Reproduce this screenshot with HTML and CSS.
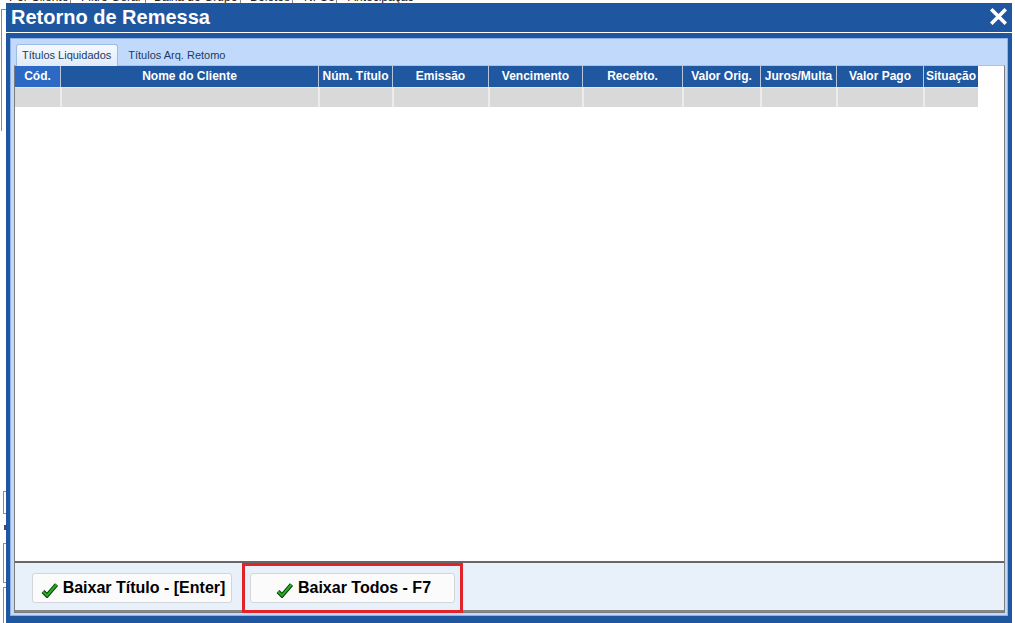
FILE: index.html
```html
<!DOCTYPE html>
<html lang="pt-BR">
<head>
<meta charset="utf-8">
<title>Retorno de Remessa</title>
<link rel="stylesheet" href="styles.css">
</head>
<body>
<div class="bg-app">
  <div class="bg-tabs">
    <span class="bg-tab w1">Por Cliente</span>
    <span class="bg-tab w2">Filtro Geral</span>
    <span class="bg-tab w3">Baixa do Grupo</span>
    <span class="bg-tab w4">Boletos</span>
    <span class="bg-tab w5">NFSe</span>
    <span class="bg-tab w6">Antecipação</span>
  </div>
  <div class="bg-frame"></div>
  <div class="bg-box b1"></div>
  <div class="bg-dot"></div>
  <div class="bg-box b2"></div>
  <div class="bg-box b3"></div>
</div>

<div class="window">
  <div class="titlebar">
    <span class="title">Retorno de Remessa</span>
    <svg class="close" width="17" height="17" viewBox="0 0 17 17" aria-label="Fechar">
      <path d="M2.5 2.5 L14.5 14.5 M14.5 2.5 L2.5 14.5" stroke="#fff" stroke-width="3.6" stroke-linecap="square" fill="none"/>
    </svg>
  </div>
  <div class="panel">
    <div class="tabs">
      <div class="tab active">Títulos Liquidados</div>
      <div class="tab">Títulos Arq. Retomo</div>
    </div>
    <div class="tabpage">
      <div class="gridarea">
        <div class="grid">
          <div class="hcell sel">Cód.</div>
          <div class="hcell">Nome do Cliente</div>
          <div class="hcell">Núm. Título</div>
          <div class="hcell">Emissão</div>
          <div class="hcell">Vencimento</div>
          <div class="hcell">Recebto.</div>
          <div class="hcell">Valor Orig.</div>
          <div class="hcell">Juros/Multa</div>
          <div class="hcell">Valor Pago</div>
          <div class="hcell">Situação</div>
          <div class="dcell"></div>
          <div class="dcell"></div>
          <div class="dcell"></div>
          <div class="dcell"></div>
          <div class="dcell"></div>
          <div class="dcell"></div>
          <div class="dcell"></div>
          <div class="dcell"></div>
          <div class="dcell"></div>
          <div class="dcell"></div>
        </div>
      </div>
      <div class="actions">
        <button class="btn">
          <svg class="check" width="17" height="16" viewBox="0 0 17 16"><path d="M2 9.5 L6 13.5 L15.5 2.5" stroke="#0b3a0b" stroke-width="4.2" fill="none" stroke-linejoin="miter"/><path d="M2 9.5 L6 13.5 L15.5 2.5" stroke="#22b022" stroke-width="2.2" fill="none"/></svg>
          <span>Baixar Título - [Enter]</span>
        </button>
        <div class="highlight">
          <button class="btn wide">
            <svg class="check" width="17" height="16" viewBox="0 0 17 16"><path d="M2 9.5 L6 13.5 L15.5 2.5" stroke="#0b3a0b" stroke-width="4.2" fill="none" stroke-linejoin="miter"/><path d="M2 9.5 L6 13.5 L15.5 2.5" stroke="#22b022" stroke-width="2.2" fill="none"/></svg>
            <span>Baixar Todos - F7</span>
          </button>
        </div>
      </div>
    </div>
  </div>
</div>
</body>
</html>
```
FILE: styles.css
```css
* { box-sizing: border-box; }
html, body { margin: 0; padding: 0; }
body {
  width: 1015px;
  height: 623px;
  overflow: hidden;
  position: relative;
  background: #ffffff;
  font-family: "Liberation Sans", Arial, sans-serif;
}

/* background application (mostly hidden behind the modal) */
.bg-tabs {
  position: absolute;
  top: -10px;
  left: 0;
  display: flex;
  font-size: 12px;
  color: #222;
}
.bg-tab {
  display: block;
  height: 14px;
  line-height: 14px;
  padding-left: 9px;
  border-right: 1px solid #8a8a8a;
}
.w1 { width: 71px; }
.w2 { width: 75px; padding-left: 10px; }
.w3 { width: 95px; padding-left: 8px; }
.w4 { width: 52px; padding-left: 9px; }
.w5 { width: 44px; padding-left: 11px; }
.w6 { width: 100px; padding-left: 11px; border-right: none; }
.bg-frame {
  position: absolute;
  left: 1px;
  top: 9px;
  width: 20px;
  height: 122px;
  border-left: 1px solid #8c8c8c;
  border-top: 1px solid #8c8c8c;
}
.bg-box {
  position: absolute;
  left: 3px;
  width: 10px;
  border: 1px solid #8c8c8c;
}
.b1 { top: 491px; height: 23px; }
.b2 { top: 543px; height: 40px; }
.b3 { top: 587px; height: 40px; }
.bg-dot {
  position: absolute;
  left: 4px;
  top: 525px;
  width: 3px;
  height: 5px;
  background: #5b3f7a;
}

/* modal window */
.window {
  position: absolute;
  left: 6px;
  top: 3px;
  width: 1006px;
  height: 620px;
  background: #1e569f;
  display: flex;
  flex-direction: column;
  padding-bottom: 7px;
}
.titlebar {
  height: 30px;
  flex: none;
  display: flex;
  align-items: center;
  justify-content: space-between;
  padding: 0 5px 0 5px;
  border-bottom: 1px solid #ffffff;
}
.title {
  color: #ffffff;
  font-weight: bold;
  font-size: 20px;
  line-height: 29px;
}
.close { display: block; margin-top: -2px; }

.panel {
  flex: 1;
  margin: 5px 4px 0 4px;
  background: #c1dafc;
  border: 1px solid #8eb2e8;
  display: flex;
  flex-direction: column;
  padding: 0 2px 2px 3px;
}
.tabs {
  height: 26px;
  flex: none;
  display: flex;
  align-items: flex-end;
  padding-left: 2px;
}
.tab {
  height: 22px;
  padding: 1px 6px 0 6px;
  line-height: 20px;
  font-size: 11px;
  color: #1d3a63;
  margin-bottom: -1px;
  position: relative;
}
.tab.active {
  background: linear-gradient(#f6f9fe, #dfebfa);
  border: 1px solid #9cbce6;
  border-bottom: none;
  border-radius: 3px 3px 0 0;
  padding: 0 6px 0 5px;
  z-index: 1;
  margin-right: 4px;
}
.tabpage {
  flex: 1;
  display: flex;
  flex-direction: column;
  border: 1px solid #7c7c7c;
  border-top-color: #a9c3e6;
  background: #ffffff;
}
.gridarea {
  flex: 1;
  background: #ffffff;
}
.grid {
  display: grid;
  grid-template-columns: 45px 258px 74px 96px 94px 100px 78px 76px 87px 55px;
  grid-template-rows: 21px 20px;
  width: 963px;
}
.hcell {
  background: #1f57a1;
  color: #ffffff;
  font-weight: bold;
  font-size: 12px;
  line-height: 21px;
  text-align: center;
  white-space: nowrap;
  border-left: 1px solid #b9c6d8;
  overflow: hidden;
}
.hcell.sel {
  background: #2b69c5;
  border-left: none;
}
.dcell {
  background: #d9d9d9;
  border-left: 2px solid #ececec;
  border-top: 1px solid #e6e6e6;
}
.dcell:nth-child(11) { border-left: none; }

.actions {
  flex: none;
  height: 51px;
  background: #e8f0fa;
  border-top: 2px solid #666666;
  border-bottom: 2px solid #858585;
  display: flex;
  align-items: flex-start;
  padding: 10px 0 0 17px;
  gap: 18px;
}
.btn {
  height: 30px;
  width: 200px;
  background: #fbfbfb;
  border: 1px solid #d2d6dc;
  border-radius: 3px;
  display: flex;
  align-items: center;
  justify-content: center;
  gap: 5px;
  font-family: "Liberation Sans", Arial, sans-serif;
  font-weight: bold;
  font-size: 16px;
  color: #000000;
  padding: 0 0 0 2px;
}
.btn.wide { width: 205px; }
.check { display: block; margin-top: 3px; }
.highlight {
  position: relative;
}
.highlight::after {
  content: "";
  position: absolute;
  left: -8px;
  right: -8px;
  top: -10px;
  bottom: -10px;
  border: 3px solid #e1232a;
  pointer-events: none;
}
```
